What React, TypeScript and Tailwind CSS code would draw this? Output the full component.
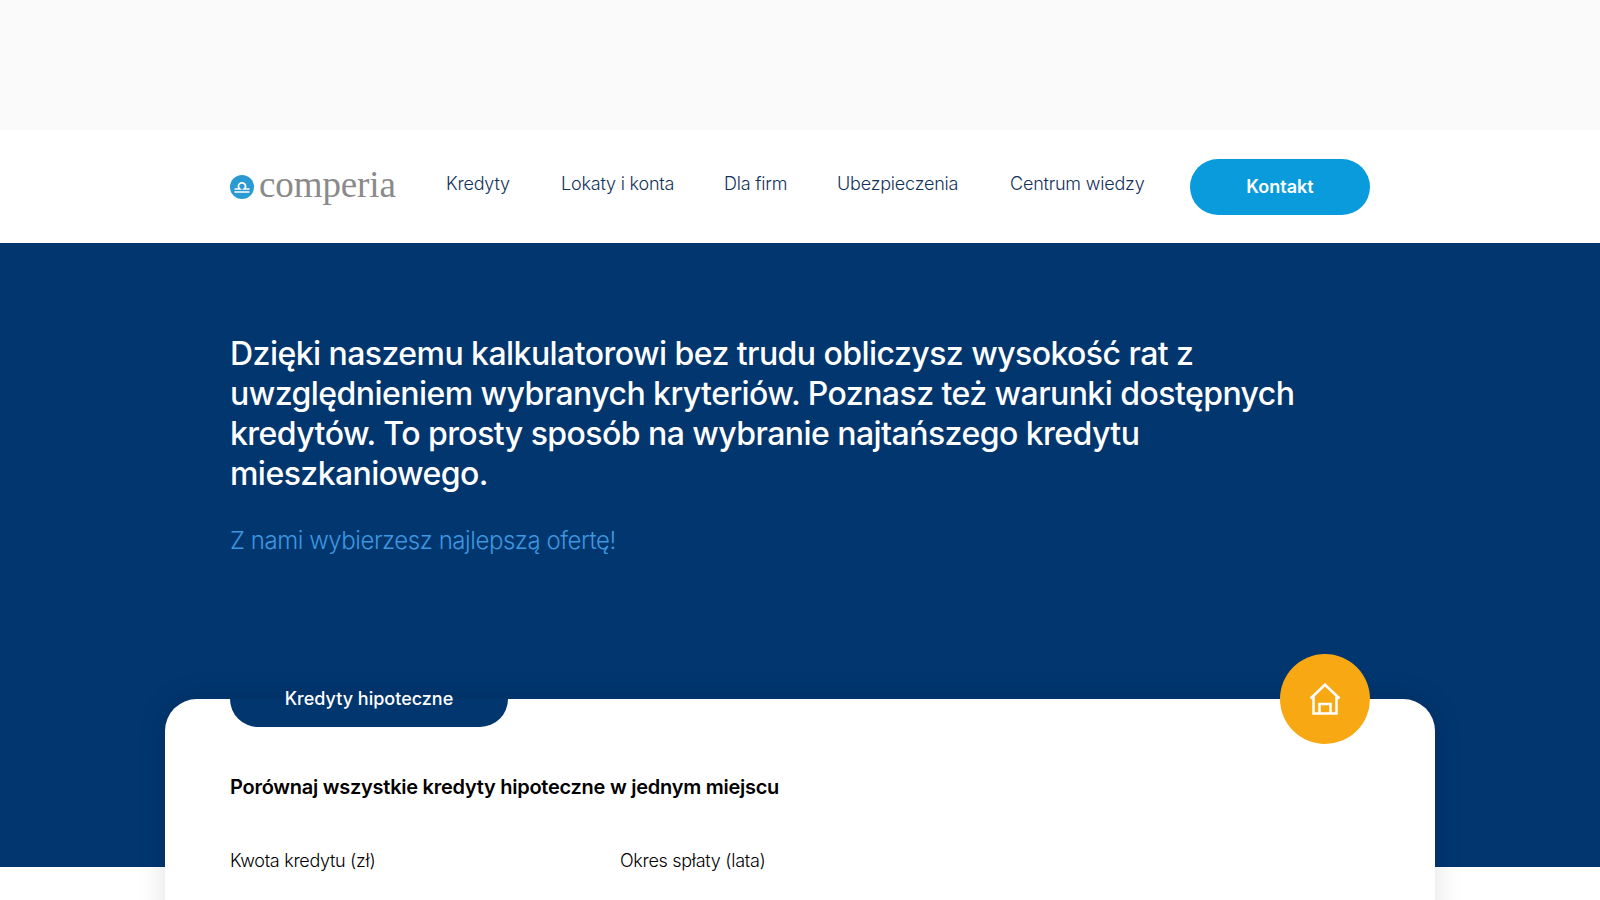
import React from 'react';

const navItems = [
  { label: 'Kredyty', width: 'w-[65px]' },
  { label: 'Lokaty i konta', width: 'w-[113px]' },
  { label: 'Dla firm', width: 'w-[63px]' },
  { label: 'Ubezpieczenia', width: 'w-[123px]' },
  { label: 'Centrum wiedzy', width: 'w-[135px]' },
];

const Logo = () => (
  <div className="flex items-center w-[216px]">
    <svg width="24" height="24" viewBox="0 0 24 24" className="mt-[1px]">
      <circle cx="12" cy="12" r="12" fill="#2a9ad3" />
      <path d="M4.5 14h5.2a3.6 3.6 0 0 1-1.3-2.6 3.6 3.6 0 1 1 7.2 0 3.6 3.6 0 0 1-1.3 2.6h5.2M4.5 17h15" fill="none" stroke="#fff" strokeWidth="1.7" />
    </svg>
    <span className="ml-[5px] -mt-[4px] text-[37px] leading-none tracking-[-0.1px] text-[#8a8a8a] font-['Liberation_Serif',serif]">comperia</span>
  </div>
);

const App = () => {
  return (
    <div className="h-screen overflow-hidden bg-white font-['Inter',sans-serif]">
      <div className="h-[130px] bg-[#fafafa]" />

      {/* Navbar */}
      <header className="h-[113px] bg-white">
        <nav className="mx-auto flex h-full w-[1140px] items-center">
          <Logo />
          <ul className="flex gap-[50px] text-[18px] font-[350] tracking-[-0.2px] text-[#12325a] -mt-[6px]">
            {navItems.map((item) => (
              <li key={item.label} className={`${item.width} whitespace-nowrap`}>{item.label}</li>
            ))}
          </ul>
          <button className="ml-auto h-[56px] w-[180px] rounded-full bg-[#0a9bdc] text-[18px] font-semibold text-white">Kontakt</button>
        </nav>
      </header>

      {/* Hero */}
      <section className="relative h-[624px] bg-[#02366f]">
        <div className="mx-auto w-[1140px] pt-[91px]">
          <p className="text-[32px] leading-[40px] font-medium tracking-[-0.55px] text-white">
            Dzięki naszemu kalkulatorowi bez trudu obliczysz wysokość rat z<br />
            uwzględnieniem wybranych kryteriów. Poznasz też warunki dostępnych<br />
            kredytów. To prosty sposób na wybranie najtańszego kredytu<br />
            mieszkaniowego.
          </p>
          <p className="mt-[31px] text-[24px] leading-[32px] font-light tracking-[-0.44px] text-[#3d97e0]">Z nami wybierzesz najlepszą ofertę!</p>
        </div>
      </section>

      {/* Calculator card */}
      <div className="relative mx-auto -mt-[168px] w-[1270px] h-[400px] rounded-t-[32px] bg-white px-[65px] shadow-[0_0_30px_rgba(0,0,0,0.12)]">
        <div className="flex items-start justify-between">
          <div className="flex h-[28px] w-[278px] items-start justify-center rounded-b-[28px] bg-[#02366f] text-[18px] font-medium text-white">
            <span className="-mt-[13px] flex h-[24px] items-center">Kredyty hipoteczne</span>
          </div>
          <div className="-mt-[45px] flex h-[90px] w-[90px] items-center justify-center rounded-full bg-[#f8a812]">
            <svg width="32" height="32" viewBox="0 0 32 32" fill="none" stroke="#fff" strokeWidth="2.5">
              <path d="M1.5 15.5 16 1.8l14.5 13.7M4.5 13v17.5h23V13" />
              <path d="M10.5 30.5V21h11v9.5" />
            </svg>
          </div>
        </div>
        <h2 className="mt-[28px] text-[20px] font-semibold tracking-[-0.26px] text-black">Porównaj wszystkie kredyty hipoteczne w jednym miejscu</h2>
        <div className="mt-[45px] flex text-[18px] font-light tracking-[-0.3px] text-black">
          <span className="w-[390px]">Kwota kredytu (zł)</span>
          <span>Okres spłaty (lata)</span>
        </div>
      </div>
    </div>
  );
};

export default App;
